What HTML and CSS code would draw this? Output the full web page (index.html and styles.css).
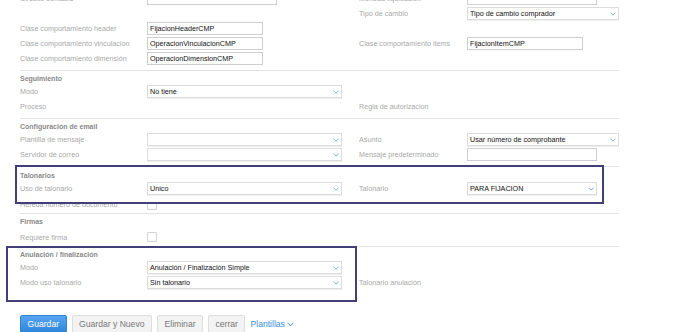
FILE: index.html
```html
<!DOCTYPE html>
<html lang="es">
<head>
<meta charset="utf-8">
<title>Formulario</title>
<link rel="stylesheet" href="styles.css">
</head>
<body>
<div class="form">
  <div class="block top">
    <div class="row">
      <div class="cell left"><span class="lbl">Circuito contable</span><div class="input w130"></div></div>
      <div class="cell right"><span class="lbl">Moneda liquidación</span><div class="input w130"></div></div>
    </div>
    <div class="row">
      <div class="cell left"></div>
      <div class="cell right"><span class="lbl">Tipo de cambio</span><div class="select w152"><span>Tipo de cambio comprador</span><svg class="chev" width="6" height="4" viewBox="0 0 6 4"><path d="M0.5 0.7 L3 3.2 L5.5 0.7"/></svg></div></div>
    </div>
    <div class="row">
      <div class="cell left"><span class="lbl">Clase comportamiento header</span><div class="input w116">FijacionHeaderCMP</div></div>
    </div>
    <div class="row">
      <div class="cell left"><span class="lbl">Clase comportamiento vinculacion</span><div class="input w116">OperacionVinculacionCMP</div></div>
      <div class="cell right"><span class="lbl">Clase comportamiento items</span><div class="input w116">FijacionItemCMP</div></div>
    </div>
    <div class="row">
      <div class="cell left"><span class="lbl">Clase comportamiento dimensión</span><div class="input w116">OperacionDimensionCMP</div></div>
    </div>
  </div>

  <div class="section">
    <div class="title">Seguimiento</div>
    <div class="row">
      <div class="cell left"><span class="lbl">Modo</span><div class="select w195"><span>No tiene</span><svg class="chev" width="6" height="4" viewBox="0 0 6 4"><path d="M0.5 0.7 L3 3.2 L5.5 0.7"/></svg></div></div>
    </div>
    <div class="row">
      <div class="cell left"><span class="lbl">Proceso</span></div>
      <div class="cell right"><span class="lbl">Regla de autorizacion</span></div>
    </div>
  </div>

  <div class="section">
    <div class="title">Configuración de email</div>
    <div class="row">
      <div class="cell left"><span class="lbl">Plantilla de mensaje</span><div class="select w195"><span></span><svg class="chev" width="6" height="4" viewBox="0 0 6 4"><path d="M0.5 0.7 L3 3.2 L5.5 0.7"/></svg></div></div>
      <div class="cell right"><span class="lbl">Asunto</span><div class="select w152"><span>Usar número de comprobante</span><svg class="chev" width="6" height="4" viewBox="0 0 6 4"><path d="M0.5 0.7 L3 3.2 L5.5 0.7"/></svg></div></div>
    </div>
    <div class="row">
      <div class="cell left"><span class="lbl">Servidor de correo</span><div class="select w195"><span></span><svg class="chev" width="6" height="4" viewBox="0 0 6 4"><path d="M0.5 0.7 L3 3.2 L5.5 0.7"/></svg></div></div>
      <div class="cell right"><span class="lbl">Mensaje predeterminado</span><div class="input w130"></div></div>
    </div>
  </div>

  <div class="section talonarios">
    <div class="box">
      <div class="title">Talonarios</div>
      <div class="row">
        <div class="cell left"><span class="lbl">Uso de talonario</span><div class="select w195"><span>Unico</span><svg class="chev" width="6" height="4" viewBox="0 0 6 4"><path d="M0.5 0.7 L3 3.2 L5.5 0.7"/></svg></div></div>
        <div class="cell right"><span class="lbl">Talonario</span><div class="select w130"><span>PARA FIJACION</span><svg class="chev" width="6" height="4" viewBox="0 0 6 4"><path d="M0.5 0.7 L3 3.2 L5.5 0.7"/></svg></div></div>
      </div>
    </div>
    <div class="row under">
      <div class="cell left"><span class="lbl">Hereda número de documento</span><div class="check"></div></div>
    </div>
  </div>

  <div class="section firmas">
    <div class="title">Firmas</div>
    <div class="row lowered">
      <div class="cell left"><span class="lbl">Requiere firma</span><div class="check"></div></div>
    </div>
  </div>

  <div class="section anulacion">
    <div class="hl"></div>
    <div class="title">Anulación / finalización</div>
    <div class="row">
      <div class="cell left"><span class="lbl">Modo</span><div class="select w195"><span>Anulación / Finalización Simple</span><svg class="chev" width="6" height="4" viewBox="0 0 6 4"><path d="M0.5 0.7 L3 3.2 L5.5 0.7"/></svg></div></div>
    </div>
    <div class="row">
      <div class="cell left"><span class="lbl">Modo uso talonario</span><div class="select w195"><span>Sin talonario</span><svg class="chev" width="6" height="4" viewBox="0 0 6 4"><path d="M0.5 0.7 L3 3.2 L5.5 0.7"/></svg></div></div>
      <div class="cell right"><span class="lbl">Talonario anulación</span></div>
    </div>
  </div>

  <div class="actions">
    <button class="btn primary">Guardar</button>
    <button class="btn">Guardar y Nuevo</button>
    <button class="btn">Eliminar</button>
    <button class="btn">cerrar</button>
    <span class="link">Plantillas <svg class="chev2" width="7" height="5" viewBox="0 0 7 5"><path d="M0.6 0.8 L3.5 3.8 L6.4 0.8"/></svg></span>
  </div>
</div>
</body>
</html>
```

FILE: styles.css
```css
html, body {
  margin: 0;
  padding: 0;
  background: #ffffff;
  overflow: hidden;
}

body {
  font-family: "Liberation Sans", Arial, sans-serif;
  width: 690px;
  height: 332px;
}

.form {
  width: 599px;
  padding-left: 20px;
  margin-top: -9px;
}

.block.top {
  padding-bottom: 4px;
}

.row {
  display: flex;
  align-items: center;
  height: 15px;
}

.cell {
  display: flex;
  align-items: center;
}

.cell.left {
  width: 339px;
  flex: none;
}

.lbl {
  font-size: 7.2px;
  color: #a9a9a9;
  white-space: nowrap;
  flex: none;
}

.left .lbl {
  width: 127px;
}

.right .lbl {
  width: 108px;
}

.input,
.select {
  height: 13px;
  box-sizing: border-box;
  background: #ffffff;
  font-size: 7.2px;
  color: #111111;
  padding-left: 2px;
  display: flex;
  align-items: center;
  white-space: nowrap;
  flex: none;
}

.input {
  border: 1px solid #cfcfcf;
}

.select {
  border: 1px solid #dcdcdc;
  justify-content: space-between;
  padding-right: 2px;
  box-shadow: 0 1px 0 #efefef;
}

.chev {
  flex: none;
}

.chev path {
  fill: none;
  stroke: #6aa3df;
  stroke-width: 0.9;
}

.w116 { width: 116px; }
.w130 { width: 130px; }
.w152 { width: 152px; }
.w195 { width: 195px; }

.section {
  border-top: 1px solid #e3e3e3;
  padding: 3px 0 4px;
}

.title {
  height: 10px;
  line-height: 10px;
  font-size: 7px;
  font-weight: bold;
  color: #8a8a8a;
  white-space: nowrap;
}

.section.talonarios {
  padding: 0 0 1px;
}

.box {
  position: relative;
  z-index: 1;
  margin: -2px 15px 0 -5px;
  border: 2px solid #423f78;
  background: #ffffff;
  padding: 4px 0 6px 3px;
}

.row.under {
  margin-top: -7px;
}

.check {
  width: 10px;
  height: 10px;
  box-sizing: border-box;
  border: 1px solid #d2d2d2;
  border-radius: 1px;
  background: #ffffff;
}

.section.firmas {
  padding: 3px 0 1.5px;
}

.row.lowered {
  margin-top: 2.5px;
}

.section.anulacion {
  position: relative;
  padding: 3px 0 12px;
}

.hl {
  position: absolute;
  top: -1px;
  left: -14px;
  width: 351px;
  height: 56px;
  box-sizing: border-box;
  border: 2px solid #423f78;
}

.actions {
  margin-top: 13px;
  display: flex;
  align-items: center;
  gap: 5px;
}

.btn {
  height: 18px;
  box-sizing: border-box;
  padding: 0 6.5px;
  font-family: "Liberation Sans", Arial, sans-serif;
  font-size: 8.6px;
  line-height: 16px;
  color: #777777;
  background: #f3f3f3;
  border: 1px solid #dddddd;
  border-radius: 2px;
  margin: 0;
}

.btn.primary {
  color: #ffffff;
  background: linear-gradient(#55a5f0, #2f86dc);
  border-color: #2f84d8;
}

.link {
  font-size: 8.6px;
  color: #3a8ddb;
  display: flex;
  align-items: center;
  gap: 2px;
  white-space: nowrap;
}

.chev2 path {
  fill: none;
  stroke: #3a8ddb;
  stroke-width: 1;
}
```
